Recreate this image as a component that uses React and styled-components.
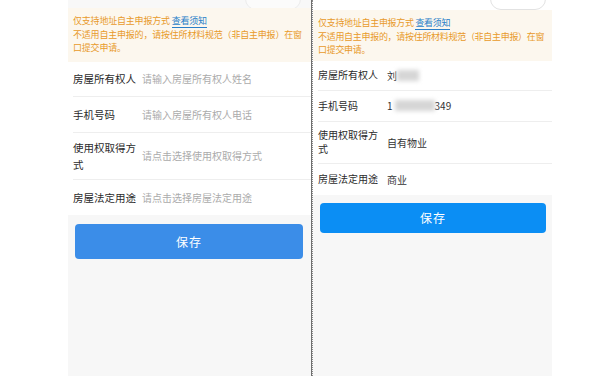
import React from 'react';
import styled, {createGlobalStyle, css} from 'styled-components';

const GlobalStyle = createGlobalStyle`
    html, body {
        margin: 0;
        padding: 0;
        background: #ffffff;
        font-family: "Noto Sans CJK SC", "Noto Sans", sans-serif;
    }
`;

const Page = styled.div`
    display: flex;
    align-items: flex-start;
    padding-left: 68px;
    height: 389px;
    box-sizing: border-box;
`;

const Panel = styled.div`
    position: relative;
    width: ${({w}) => w}px;
    flex-shrink: 0;
    height: 376px;
    background: #f7f7f7;
    display: flex;
    flex-direction: column;
    box-sizing: border-box;
    ${({side}) => side === 'left' ? css`
        border-right: 1px solid #6f6f6f;
    ` : css`
        border-left: 1px dotted #8a8a8a;
    `}
`;

const Header = styled.div`
    height: ${({h}) => h}px;
    background: ${({bg}) => bg};
    overflow: hidden;
    display: flex;
    justify-content: flex-end;
    padding-right: 6px;
`;

const Capsule = styled.div`
    width: 54px;
    height: 20px;
    margin-top: -12px;
    border: 1px solid ${({faint}) => faint ? '#ececec' : '#e2e2e2'};
    border-radius: 11px;
    background: ${({faint}) => faint ? '#fbfbfb' : '#ffffff'};
    margin-right: ${({mr}) => mr}px;
`;

const Notice = styled.div`
    background: #fcf7ee;
    color: #e89a2a;
    font-size: 9px;
    line-height: 13.5px;
    padding: ${({pad}) => pad};
    letter-spacing: ${({ls}) => ls}px;
`;

const NoticeLink = styled.span`
    color: #2a7fc9;
    border-bottom: 1px solid #2a7fc9;
`;

const Form = styled.div`
    background: #ffffff;
`;

const Row = styled.div`
    display: flex;
    align-items: center;
    min-height: ${({h}) => h}px;
    margin-left: ${({inset}) => inset}px;
    border-bottom: ${({last}) => last ? 'none' : '1px solid #eeeeee'};
    box-sizing: border-box;
`;

const Label = styled.div`
    width: ${({w}) => w}px;
    flex-shrink: 0;
    font-size: ${({size}) => size}px;
    line-height: ${({lh}) => lh}px;
    color: #2b2b2b;
    font-weight: 400;
`;

const Value = styled.div`
    font-size: ${({size}) => size}px;
    color: ${({placeholder}) => placeholder ? '#ababab' : '#333333'};
    white-space: nowrap;
    display: flex;
    align-items: center;
`;

const Blur = styled.span`
    display: inline-block;
    width: ${({w}) => w}px;
    height: 11px;
    background: #d6d6d6;
    filter: blur(2px);
    margin-left: ${({ml}) => ml || 0}px;
`;

const SaveButton = styled.button`
    margin: ${({m}) => m};
    height: ${({h}) => h}px;
    border: none;
    border-radius: 4px;
    background: ${({bg}) => bg};
    color: #ffffff;
    font-family: inherit;
    font-size: 12px;
    letter-spacing: 1px;
`;

const noticeBody = (
    <>
        仅支持地址自主申报方式 <NoticeLink>查看须知</NoticeLink>
        <br />
        不适用自主申报的，请按住所材料规范（非自主申报）在窗口提交申请。
    </>
);

export default function App() {
    return (
        <>
            <GlobalStyle />
            <Page>
                <Panel side="left" w={244}>
                    <Header h={8} bg="#f8f8f8">
                        <Capsule faint mr={4} />
                    </Header>
                    <Notice pad="6px 6px 7px 5px" ls={-0.2}>{noticeBody}</Notice>
                    <Form>
                        <Row h={35} inset={5}>
                            <Label w={69} size={10.5} lh={17}>房屋所有权人</Label>
                            <Value placeholder size={10}>请输入房屋所有权人姓名</Value>
                        </Row>
                        <Row h={36} inset={5}>
                            <Label w={69} size={10.5} lh={17}>手机号码</Label>
                            <Value placeholder size={10}>请输入房屋所有权人电话</Value>
                        </Row>
                        <Row h={47} inset={5}>
                            <Label w={69} size={10.5} lh={17}>使用权取得方<br />式</Label>
                            <Value placeholder size={10}>请点击选择使用权取得方式</Value>
                        </Row>
                        <Row h={35} inset={5} last>
                            <Label w={69} size={10.5} lh={17}>房屋法定用途</Label>
                            <Value placeholder size={10}>请点击选择房屋法定用途</Value>
                        </Row>
                    </Form>
                    <SaveButton m="9px 8px 0 7px" h={35} bg="#3b8de8">保存</SaveButton>
                </Panel>
                <Panel side="right" w={240}>
                    <Header h={10} bg="#ffffff">
                        <Capsule mr={0} />
                    </Header>
                    <Notice pad="6px 0 4px 5px" ls={-0.3}>{noticeBody}</Notice>
                    <Form>
                        <Row h={30} inset={5}>
                            <Label w={69} size={10} lh={14}>房屋所有权人</Label>
                            <Value size={10}>刘<Blur w={22} /></Value>
                        </Row>
                        <Row h={31} inset={5}>
                            <Label w={69} size={10} lh={14}>手机号码</Label>
                            <Value size={10}>1<Blur w={40} ml={2} />349</Value>
                        </Row>
                        <Row h={42} inset={5}>
                            <Label w={69} size={10} lh={14}>使用权取得方<br />式</Label>
                            <Value size={10}>自有物业</Value>
                        </Row>
                        <Row h={31} inset={5} last>
                            <Label w={69} size={10} lh={14}>房屋法定用途</Label>
                            <Value size={10}>商业</Value>
                        </Row>
                    </Form>
                    <SaveButton m="8px 6px 0 7px" h={30} bg="#0b8ef4">保存</SaveButton>
                </Panel>
            </Page>
        </>
    );
}
